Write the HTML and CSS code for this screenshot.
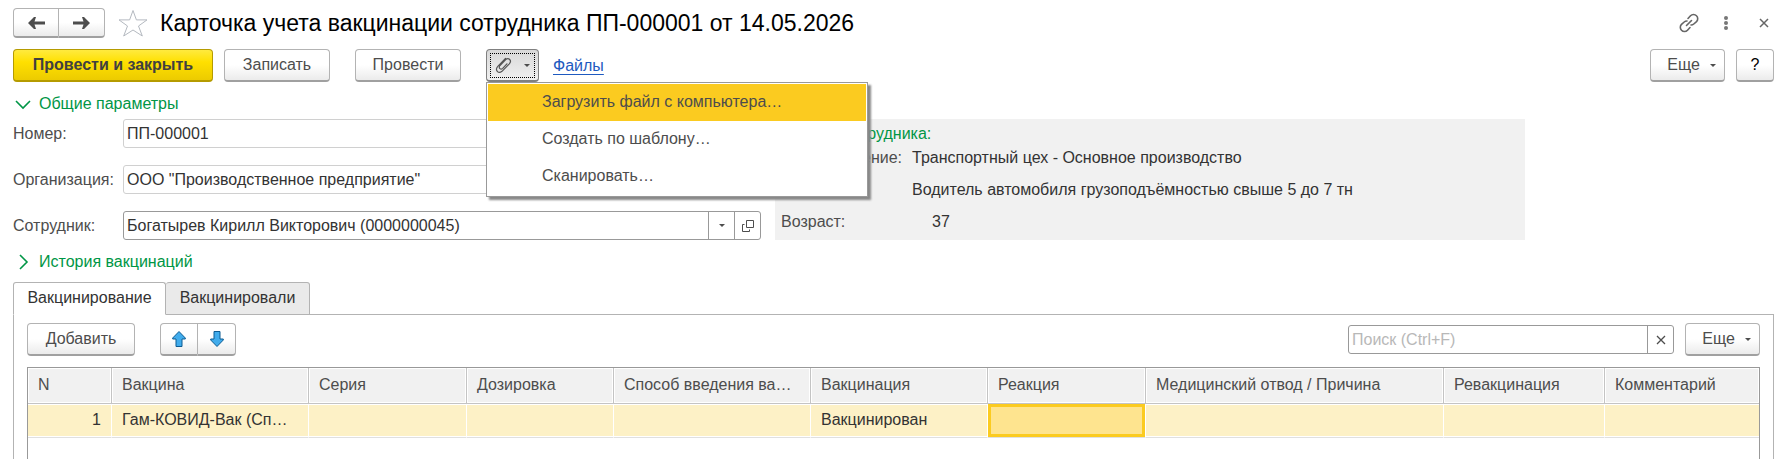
FILE: index.html
```
<!DOCTYPE html>
<html lang="ru">

<head>
  <meta charset="UTF-8" />
  <meta name="viewport" content="width=device-width, initial-scale=1.0" />
  <title>Карточка учета вакцинации сотрудника</title>
  <link rel="stylesheet" href="styles.css">
</head>

<body>
  <header class="titlebar">
    <div class="button-group">
      <button class="button nav" type="button" aria-label="Назад">
        <svg width="18" height="14" viewBox="0 0 18 14"><path d="M1 7l6-6h2L7.500 5.500H18v3H7.500L9 13H7z" fill="#4d4d4d" /></svg>
      </button>
      <button class="button nav" type="button" aria-label="Вперед">
        <svg width="18" height="14" viewBox="0 0 18 14"><path d="M17 7l-6-6H9l1.500 4.500H0v3h10.500L9 13h2z" fill="#4d4d4d" /></svg>
      </button>
    </div>
    <button class="icon-button star" type="button" aria-label="В избранное">
      <svg width="30" height="28" viewBox="0 0 30 28"><path d="M15 1.500l3.400 9.400h10.600l-8.500 6.100 3.800 10L15 21l-9.300 6 3.800-10L1 10.900h10.600z" fill="#fff" stroke="#b4b9c0" /></svg>
    </button>
    <h1 class="title">Карточка учета вакцинации сотрудника ПП-000001 от 14.05.2026</h1>
    <div class="window-tools">
      <button class="icon-button" type="button" aria-label="Получить ссылку">
        <svg width="20" height="20" viewBox="0 0 20 20" fill="none" stroke="#666" stroke-width="1.600" stroke-linecap="round">
          <path d="M9 5.500l2.500-2.700a4.100 4.100 0 0 1 6 0 4.100 4.100 0 0 1 0 5.800L14.800 11a4.200 4.200 0 0 1-2.800 1" />
          <path d="M11 14.500l-2.500 2.700a4.100 4.100 0 0 1-6 0 4.100 4.100 0 0 1 0-5.800L5.200 9A4.200 4.200 0 0 1 8 8" />
          <path d="M7.500 12.500l5-5" />
        </svg>
      </button>
      <button class="icon-button" type="button" aria-label="Меню">
        <svg width="6" height="16" viewBox="0 0 6 16" fill="#777"><circle cx="3" cy="3" r="2" /><circle cx="3" cy="8" r="2" /><circle cx="3" cy="13" r="2" /></svg>
      </button>
      <button class="icon-button" type="button" aria-label="Закрыть">
        <svg width="10" height="10" viewBox="0 0 10 10"><path d="M1 1l8 8M9 1l-8 8" stroke="#666" stroke-width="1.500" /></svg>
      </button>
    </div>
  </header>

  <div class="commands">
    <button class="button primary" type="button">Провести и закрыть</button>
    <button class="button" type="button">Записать</button>
    <button class="button post" type="button">Провести</button>
    <div class="attach">
      <button class="button attach-button" type="button" aria-label="Присоединенные файлы" aria-expanded="true">
        <svg width="17" height="18" viewBox="0 0 17 18" fill="none" stroke="#555" stroke-width="1.200" stroke-linecap="round">
          <path d="M10.500 2.500L2.800 10.300C-.4 14 3.200 18.300 7 15.300l7.300-7.500c3-3.400-.8-6.600-3.800-4L5 9.500c-2 2.600.8 4.700 2.700 2.800l4.200-4.500" />
        </svg>
        <span class="caret"></span>
      </button>
      <ul class="menu">
        <li><button class="menu-item active" type="button">Загрузить файл с компьютера…</button></li>
        <li><button class="menu-item" type="button">Создать по шаблону…</button></li>
        <li><button class="menu-item" type="button">Сканировать…</button></li>
      </ul>
    </div>
    <a class="files" href="#">Файлы</a>
    <div class="commands-right">
      <button class="button more" type="button">Еще <span class="caret"></span></button>
      <button class="button help" type="button">?</button>
    </div>
  </div>

  <h2 class="section">
    <svg width="16" height="16" viewBox="0 0 16 16"><path d="M1 5l7 7 7-7" fill="none" stroke="#009646" stroke-width="1.600" /></svg>
    Общие параметры
  </h2>
  <div class="params">
    <div class="fields">
      <label for="number">Номер:</label>
      <div class="field readonly"><input type="text" id="number" value="ПП-000001" readonly /></div>
      <label for="organization">Организация:</label>
      <div class="field readonly"><input type="text" id="organization" value='ООО "Производственное предприятие"' readonly /></div>
      <label for="employee">Сотрудник:</label>
      <div class="field">
        <input type="text" id="employee" value="Богатырев Кирилл Викторович (0000000045)" />
        <button class="field-button" type="button" aria-label="Выбрать"><span class="caret"></span></button>
        <button class="field-button" type="button" aria-label="Открыть">
          <svg width="14" height="14" viewBox="0 0 14 14" fill="none" stroke="#4d4d4d"><path d="M5.500 1.500h7v7h-7zM3.500 5.500h-2v7h7v-2" /></svg>
        </button>
      </div>
    </div>
    <div class="info">
      <h3>Данные сотрудника:</h3>
      <dl>
        <dt>Подразделение:</dt>
        <dd>Транспортный цех - Основное производство</dd>
        <dt>Должность:</dt>
        <dd>Водитель автомобиля грузоподъёмностью свыше 5 до 7 тн</dd>
        <dt>Возраст:</dt>
        <dd class="age">37</dd>
      </dl>
    </div>
  </div>

  <h2 class="section">
    <svg width="16" height="16" viewBox="0 0 16 16"><path d="M5 1l7 7-7 7" fill="none" stroke="#009646" stroke-width="1.600" /></svg>
    История вакцинаций
  </h2>

  <div class="tabs" role="tablist">
    <button class="tab selected" type="button" role="tab" aria-selected="true">Вакцинирование</button>
    <button class="tab" type="button" role="tab" aria-selected="false">Вакцинировали</button>
  </div>
  <main class="panel">
    <div class="toolbar">
      <button class="button add" type="button">Добавить</button>
      <div class="button-group">
        <button class="button move" type="button" aria-label="Переместить вверх">
          <svg width="14" height="16" viewBox="0 0 14 16"><path d="M7 .5L.7 7v1H4v7.500h6V8h3.300V7z" fill="#41acec" stroke="#0d5c93" /></svg>
        </button>
        <button class="button move" type="button" aria-label="Переместить вниз">
          <svg width="14" height="16" viewBox="0 0 14 16"><path d="M7 15.500L.7 9V8H4V.5h6V8h3.300v1z" fill="#41acec" stroke="#0d5c93" /></svg>
        </button>
      </div>
      <div class="field search">
        <input type="text" placeholder="Поиск (Ctrl+F)" aria-label="Поиск" />
        <button class="field-button" type="button" aria-label="Очистить">
          <svg width="10" height="10" viewBox="0 0 10 10"><path d="M1 1l8 8M9 1l-8 8" stroke="#4d4d4d" stroke-width="1.300" /></svg>
        </button>
      </div>
      <button class="button more" type="button">Еще <span class="caret"></span></button>
    </div>
    <div class="table-box">
      <table>
        <colgroup>
          <col class="col-n" />
          <col class="col-vaccine" />
          <col class="col-series" />
          <col class="col-dose" />
          <col class="col-method" />
          <col class="col-state" />
          <col class="col-reaction" />
          <col class="col-exemption" />
          <col class="col-repeat" />
          <col />
        </colgroup>
        <thead>
          <tr>
            <th>N</th>
            <th>Вакцина</th>
            <th>Серия</th>
            <th>Дозировка</th>
            <th>Способ введения ва…</th>
            <th>Вакцинация</th>
            <th>Реакция</th>
            <th>Медицинский отвод / Причина</th>
            <th>Ревакцинация</th>
            <th>Комментарий</th>
          </tr>
        </thead>
        <tbody>
          <tr>
            <td class="num">1</td>
            <td>Гам-КОВИД-Вак (Сп…</td>
            <td></td>
            <td></td>
            <td></td>
            <td>Вакцинирован</td>
            <td class="current"></td>
            <td></td>
            <td></td>
            <td></td>
          </tr>
        </tbody>
      </table>
    </div>
  </main>
</body>

</html>
```
FILE: styles.css
```
* {
  box-sizing: border-box;
}

body {
  display: flex;
  flex-direction: column;
  min-height: 100vh;
  margin: 0;
  padding: 8px 6px 0 13px;
  background: #fff;
  color: #4d4d4d;
  font-family: "Liberation Sans", Arial, sans-serif;
  font-size: 16px;
  line-height: 20px;
}

button,
input {
  font: inherit;
  color: inherit;
}

svg {
  display: block;
  flex: none;
}

.button {
  display: flex;
  align-items: center;
  justify-content: center;
  width: 106px;
  height: 33px;
  padding: 0;
  border: 1px solid #b3b3b3;
  border-bottom: 2px solid #a0a0a0;
  border-radius: 4px;
  background: linear-gradient(#fff 50%, #ebebeb);
}

.button.primary {
  width: 200px;
  border-color: #b59b00;
  background: linear-gradient(#ffea3f, #ffe000 40%, #eccb00);
  color: #404040;
  font-weight: bold;
}

.button-group {
  display: flex;
}

.button-group .button:first-child {
  border-radius: 4px 0 0 4px;
}

.button-group .button:last-child {
  border-left: none;
  border-radius: 0 4px 4px 0;
}

.button.nav {
  width: 46px;
  height: 30px;
}

.button.more {
  gap: 10px;
  width: 75px;
  padding-left: 8px;
}

.button.help {
  width: 38px;
  color: #000;
}

.button.add {
  width: 108px;
  margin-right: 25px;
}

.button.move {
  width: 38px;
}

.caret {
  border: 3px solid transparent;
  border-top-color: #4d4d4d;
  border-bottom: none;
}

.icon-button {
  padding: 0;
  border: none;
  background: none;
}

.titlebar {
  display: flex;
  align-items: center;
  height: 30px;
}

.star {
  margin: 0 12px 0 13px;
}

.title {
  margin: 0;
  color: #000;
  font-size: 23px;
  font-weight: normal;
}

.window-tools {
  display: flex;
  align-items: center;
  gap: 24px;
  margin-left: auto;
  padding-right: 5px;
}

.window-tools .icon-button:last-child {
  margin-left: 6px;
}

.commands {
  display: flex;
  align-items: center;
  gap: 11px;
  margin-top: 11px;
}

.post {
  margin: 0 14px;
}

.attach {
  position: relative;
}

.attach-button {
  gap: 12px;
  width: 53px;
  border-color: #808080;
  background: linear-gradient(#d8d8d8, #f0f0f0);
  outline: 1px dotted #000;
  outline-offset: -5px;
}

.menu {
  position: absolute;
  z-index: 1;
  top: 100%;
  left: 0;
  width: 382px;
  margin: 0;
  padding: 1px;
  border: 1px solid #999;
  background: #fff;
  box-shadow: 3px 3px 2px #888;
  list-style: none;
}

.menu-item {
  display: block;
  width: 100%;
  height: 37px;
  padding: 0 0 1px 54px;
  border: none;
  background: #fff;
  text-align: left;
}

.menu-item.active {
  background: #fbcb20;
}

.files {
  margin-left: 3px;
  color: #1e5ac0;
  text-underline-offset: 3px;
}

.commands-right {
  display: flex;
  gap: 11px;
  margin-left: auto;
}

.section {
  display: flex;
  align-items: center;
  gap: 8px;
  margin: 12px 0 5px;
  padding-left: 2px;
  color: #009646;
  font-size: 16px;
  font-weight: normal;
}

.params {
  display: grid;
  grid-template-columns: 748fr 750fr 235fr;
  gap: 14px;
}

.fields {
  display: grid;
  grid-template-columns: 110px 1fr;
  align-items: center;
  row-gap: 17px;
}

.field {
  display: flex;
  height: 29px;
  border: 1px solid #999;
  border-radius: 3px;
  color: #333;
}

.field.readonly {
  border-color: #d0d0d0;
}

.field input {
  flex: 1;
  min-width: 0;
  padding: 0 3px;
  border: none;
  outline: none;
  background: none;
}

.field input::placeholder {
  color: #b8b8b8;
}

.field-button {
  display: flex;
  align-items: center;
  justify-content: center;
  width: 26px;
  padding: 0;
  border: none;
  border-left: 1px solid #999;
  background: none;
}

.info {
  padding: 5px 6px 7px;
  background: #f1f1f1;
}

.info h3 {
  margin: 0 0 4px;
  color: #009646;
  font-size: 16px;
  font-weight: normal;
}

.info dl {
  display: grid;
  grid-template-columns: 131px 1fr;
  row-gap: 12px;
  margin: 0;
}

.info dd {
  margin: 0;
  color: #333;
}

.info .age {
  padding-left: 20px;
}

.tabs {
  display: flex;
  margin-top: 5px;
}

.tab {
  width: 144px;
  height: 33px;
  margin-bottom: -1px;
  padding: 0 0 2px;
  border: 1px solid #b3b3b3;
  border-left: none;
  border-radius: 3px 3px 0 0;
  background: #eaeaea;
  color: #333;
}

.tab.selected {
  z-index: 1;
  width: 153px;
  border-left: 1px solid #b3b3b3;
  border-bottom-color: #fff;
  background: #fff;
}

.panel {
  display: flex;
  flex: 1;
  flex-direction: column;
  padding: 8px 13px 0;
  border: 1px solid #b3b3b3;
  border-bottom: none;
}

.toolbar {
  display: flex;
  align-items: center;
  margin-bottom: 11px;
}

.search {
  width: 326px;
  margin: 0 11px 0 auto;
}

.table-box {
  flex: 1;
  border: 1px solid #999;
  border-bottom: none;
}

table {
  width: 100%;
  border-collapse: separate;
  border-spacing: 0;
  table-layout: fixed;
}

th,
td {
  overflow: hidden;
  padding: 0 10px 2px;
  text-align: left;
  text-overflow: ellipsis;
  white-space: nowrap;
  font-weight: normal;
}

th {
  height: 36px;
  border-right: 1px solid #c4c4c4;
  border-bottom: 1px solid #c4c4c4;
  background: #f1f1f1;
  box-shadow: inset 0 0 0 1px #fff;
}

td {
  height: 34px;
  border-right: 1px solid #fff;
  border-bottom: 1px solid #e0e0e0;
  background: #fdf1c6;
  box-shadow: inset 0 1px #fff, inset 0 -1px #fff;
  color: #333;
}

th:last-child,
td:last-child {
  border-right: none;
}

.num {
  text-align: right;
}

.current {
  background: #fee48f;
  box-shadow: inset 0 0 0 3px #fbcb20;
}

.col-n {
  width: 84px;
}

.col-vaccine,
.col-method {
  width: 197px;
}

.col-series,
.col-reaction {
  width: 158px;
}

.col-dose {
  width: 147px;
}

.col-state {
  width: 177px;
}

.col-exemption {
  width: 298px;
}

.col-repeat {
  width: 161px;
}
```
